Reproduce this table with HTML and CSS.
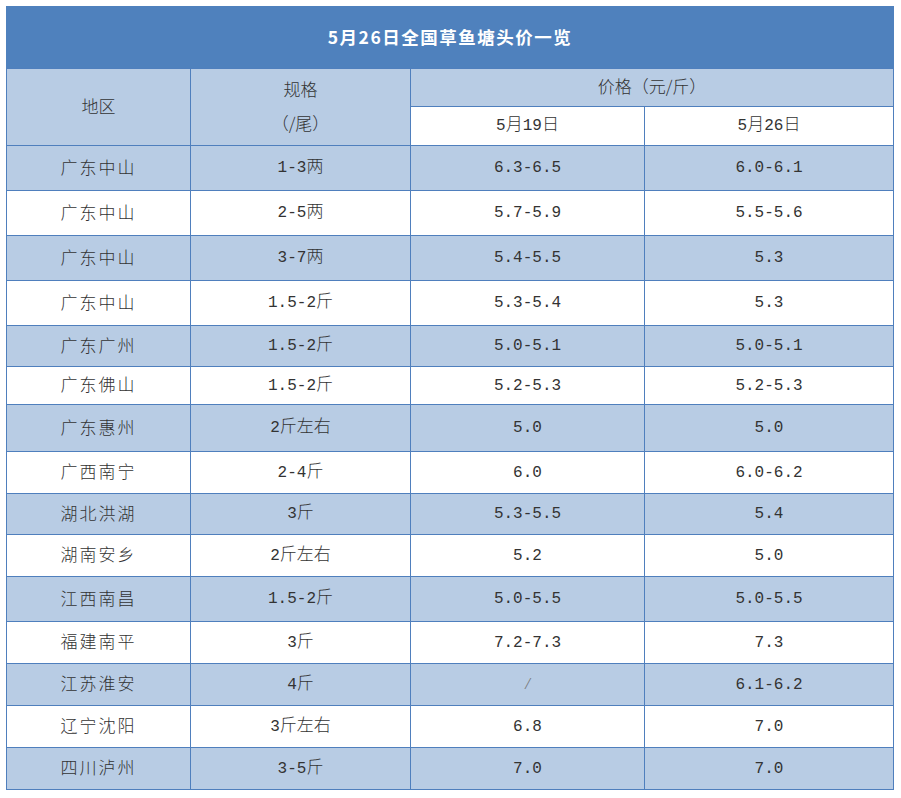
FILE: index.html
```html
<!DOCTYPE html>
<html lang="zh">
<head>
<meta charset="utf-8">
<title>5月26日全国草鱼塘头价一览</title>
<link rel="stylesheet" href="styles.css">
</head>
<body>
<table class="price-table">
  <colgroup>
    <col class="c-area"><col class="c-spec"><col class="c-p1"><col class="c-p2">
  </colgroup>
  <thead>
    <tr class="title-row"><th colspan="4">5月26日全国草鱼塘头价一览</th></tr>
    <tr class="h38 light">
      <th rowspan="2">地区</th>
      <th rowspan="2" class="spec-head"><div>规格</div><div class="sub">（/尾）</div></th>
      <th colspan="2">价格（元/斤）</th>
    </tr>
    <tr class="h39 white">
      <th><span class="num">5</span>月<span class="num">19</span>日</th>
      <th><span class="num">5</span>月<span class="num">26</span>日</th>
    </tr>
  </thead>
  <tbody>
    <tr class="h45 light"><td class="area">广东中山</td><td><span class="num">1-3</span>两</td><td><span class="num">6.3-6.5</span></td><td><span class="num">6.0-6.1</span></td></tr>
    <tr class="h45 white"><td class="area">广东中山</td><td><span class="num">2-5</span>两</td><td><span class="num">5.7-5.9</span></td><td><span class="num">5.5-5.6</span></td></tr>
    <tr class="h45 light"><td class="area">广东中山</td><td><span class="num">3-7</span>两</td><td><span class="num">5.4-5.5</span></td><td><span class="num">5.3</span></td></tr>
    <tr class="h45 white"><td class="area">广东中山</td><td><span class="num">1.5-2</span>斤</td><td><span class="num">5.3-5.4</span></td><td><span class="num">5.3</span></td></tr>
    <tr class="h41 light"><td class="area">广东广州</td><td><span class="num">1.5-2</span>斤</td><td><span class="num">5.0-5.1</span></td><td><span class="num">5.0-5.1</span></td></tr>
    <tr class="h38 white"><td class="area">广东佛山</td><td><span class="num">1.5-2</span>斤</td><td><span class="num">5.2-5.3</span></td><td><span class="num">5.2-5.3</span></td></tr>
    <tr class="h47 light"><td class="area">广东惠州</td><td><span class="num">2</span>斤左右</td><td><span class="num">5.0</span></td><td><span class="num">5.0</span></td></tr>
    <tr class="h42 white"><td class="area">广西南宁</td><td><span class="num">2-4</span>斤</td><td><span class="num">6.0</span></td><td><span class="num">6.0-6.2</span></td></tr>
    <tr class="h41 light"><td class="area">湖北洪湖</td><td><span class="num">3</span>斤</td><td><span class="num">5.3-5.5</span></td><td><span class="num">5.4</span></td></tr>
    <tr class="h42 white"><td class="area">湖南安乡</td><td><span class="num">2</span>斤左右</td><td><span class="num">5.2</span></td><td><span class="num">5.0</span></td></tr>
    <tr class="h45 light"><td class="area">江西南昌</td><td><span class="num">1.5-2</span>斤</td><td><span class="num">5.0-5.5</span></td><td><span class="num">5.0-5.5</span></td></tr>
    <tr class="h42 white"><td class="area">福建南平</td><td><span class="num">3</span>斤</td><td><span class="num">7.2-7.3</span></td><td><span class="num">7.3</span></td></tr>
    <tr class="h42 light"><td class="area">江苏淮安</td><td><span class="num">4</span>斤</td><td><span class="slash">/</span></td><td><span class="num">6.1-6.2</span></td></tr>
    <tr class="h42 white"><td class="area">辽宁沈阳</td><td><span class="num">3</span>斤左右</td><td><span class="num">6.8</span></td><td><span class="num">7.0</span></td></tr>
    <tr class="h42 light"><td class="area">四川泸州</td><td><span class="num">3-5</span>斤</td><td><span class="num">7.0</span></td><td><span class="num">7.0</span></td></tr>
  </tbody>
</table>
</body>
</html>
```

FILE: styles.css
```css
html, body {
  margin: 0;
  padding: 0;
  background: #ffffff;
}
body {
  padding: 6px 0 0 6px;
  font-family: "Noto Sans CJK SC", "Noto Sans", sans-serif;
  color: #333333;
}
.price-table {
  border-collapse: collapse;
  table-layout: fixed;
  width: 887px;
}
.c-area { width: 184px; }
.c-spec { width: 220px; }
.c-p1 { width: 234px; }
.c-p2 { width: 249px; }

.price-table th,
.price-table td {
  border: 1px solid #4f7fbd;
  padding: 0 0 3px 0;
  text-align: center;
  vertical-align: middle;
  font-size: 17px;
  font-weight: 300;
  line-height: 20px;
  white-space: nowrap;
}
.price-table .title-row th {
  height: 60px;
  padding: 0 0 1px 0;
  background: #4f81bd;
  color: #ffffff;
  font-weight: 700;
  font-size: 17.5px;
  letter-spacing: 1.5px;
  border-top-color: #4f81bd;
  border-left-color: #4f81bd;
  border-right-color: #4f81bd;
}
.light th, .light td { background: #b8cce4; }
.white th, .white td { background: #ffffff; }
.price-table .spec-head { background: #b8cce4; }
.spec-head .sub { margin-top: 14px; }

.area { letter-spacing: 2px; }
.num {
  font-family: "Liberation Mono", monospace;
  font-size: 16px;
  letter-spacing: 0;
}
.slash {
  font-family: "Liberation Serif", serif;
  font-style: italic;
  color: #777777;
}

.h38 { height: 38px; }
.h39 { height: 39px; }
.h41 { height: 41px; }
.h42 { height: 42px; }
.h45 { height: 45px; }
.h47 { height: 47px; }
```
